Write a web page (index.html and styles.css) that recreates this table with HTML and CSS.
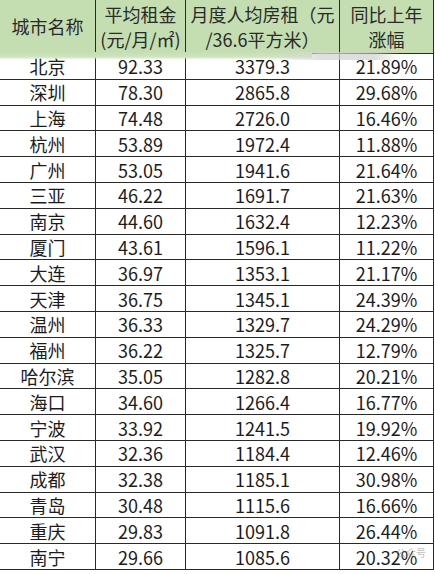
FILE: index.html
```html
<!DOCTYPE html>
<html lang="zh">
<head>
<meta charset="utf-8">
<link rel="stylesheet" href="styles.css">
</head>
<body>
<div class="sheet">
  <div class="grid">
    <div class="hd"><span>城市名称</span></div>
    <div class="hd"><span>平均租金<br>(元/月/㎡)</span></div>
    <div class="hd"><span>月度人均房租（元<br>/36.6平方米）</span></div>
    <div class="hd"><span>同比上年<br>涨幅</span></div>

    <div class="c">北京</div><div class="c">92.33</div><div class="c">3379.3</div><div class="c">21.89%</div>
    <div class="c">深圳</div><div class="c">78.30</div><div class="c">2865.8</div><div class="c">29.68%</div>
    <div class="c">上海</div><div class="c">74.48</div><div class="c">2726.0</div><div class="c">16.46%</div>
    <div class="c">杭州</div><div class="c">53.89</div><div class="c">1972.4</div><div class="c">11.88%</div>
    <div class="c">广州</div><div class="c">53.05</div><div class="c">1941.6</div><div class="c">21.64%</div>
    <div class="c">三亚</div><div class="c">46.22</div><div class="c">1691.7</div><div class="c">21.63%</div>
    <div class="c">南京</div><div class="c">44.60</div><div class="c">1632.4</div><div class="c">12.23%</div>
    <div class="c">厦门</div><div class="c">43.61</div><div class="c">1596.1</div><div class="c">11.22%</div>
    <div class="c">大连</div><div class="c">36.97</div><div class="c">1353.1</div><div class="c">21.17%</div>
    <div class="c">天津</div><div class="c">36.75</div><div class="c">1345.1</div><div class="c">24.39%</div>
    <div class="c">温州</div><div class="c">36.33</div><div class="c">1329.7</div><div class="c">24.29%</div>
    <div class="c">福州</div><div class="c">36.22</div><div class="c">1325.7</div><div class="c">12.79%</div>
    <div class="c">哈尔滨</div><div class="c">35.05</div><div class="c">1282.8</div><div class="c">20.21%</div>
    <div class="c">海口</div><div class="c">34.60</div><div class="c">1266.4</div><div class="c">16.77%</div>
    <div class="c">宁波</div><div class="c">33.92</div><div class="c">1241.5</div><div class="c">19.92%</div>
    <div class="c">武汉</div><div class="c">32.36</div><div class="c">1184.4</div><div class="c">12.46%</div>
    <div class="c">成都</div><div class="c">32.38</div><div class="c">1185.1</div><div class="c">30.98%</div>
    <div class="c">青岛</div><div class="c">30.48</div><div class="c">1115.6</div><div class="c">16.66%</div>
    <div class="c">重庆</div><div class="c">29.83</div><div class="c">1091.8</div><div class="c">26.44%</div>
    <div class="c">南宁</div><div class="c">29.66</div><div class="c">1085.6</div><div class="c">20.32%</div>
  </div>
  <div class="smear-green"></div>
  <div class="smear-gray"></div>
  <div class="watermark">公众号</div>
</div>
</body>
</html>
```

FILE: styles.css
```css
html, body {
  margin: 0;
  padding: 0;
  background: #ffffff;
}
.sheet {
  position: relative;
  width: 435px;
  height: 574px;
  overflow: hidden;
  font-family: "Noto Sans CJK SC", "Noto Sans", sans-serif;
  color: #1c1c1c;
}
.grid {
  display: grid;
  grid-template-columns: 95px 89px 153px 93px;
  grid-template-rows: 53px;
  grid-auto-rows: 24.8px;
  gap: 1px;
  background: #2a2a2a;
  padding: 0 1px 1px 0;
  width: max-content;
}
.hd {
  background: #c4deb2;
  display: flex;
  align-items: center;
  justify-content: center;
  text-align: center;
  font-size: 18px;
  line-height: 25px;
  color: #2a2a2a;
  white-space: nowrap;
  overflow: hidden;
}
.c {
  background: #ffffff;
  display: flex;
  align-items: center;
  justify-content: center;
  font-size: 18px;
  line-height: 1;
  white-space: nowrap;
}
.smear-green {
  position: absolute;
  left: 0;
  top: 52px;
  width: 312px;
  height: 7px;
  background: linear-gradient(to bottom, #c4deb2 0%, #cfe4c0 70%, rgba(220, 235, 210, 0.4) 100%);
}
.smear-gray {
  position: absolute;
  left: 270px;
  top: 52px;
  width: 130px;
  height: 8px;
  background: linear-gradient(to right, rgba(230, 230, 230, 0) 0%, rgba(215, 215, 215, 0.8) 40%, rgba(200, 200, 200, 0.6) 80%, rgba(230, 230, 230, 0) 100%);
}
.watermark {
  position: absolute;
  left: 396px;
  top: 547px;
  font-size: 10px;
  line-height: 11px;
  color: rgba(150, 150, 150, 0.6);
  white-space: nowrap;
}
```
